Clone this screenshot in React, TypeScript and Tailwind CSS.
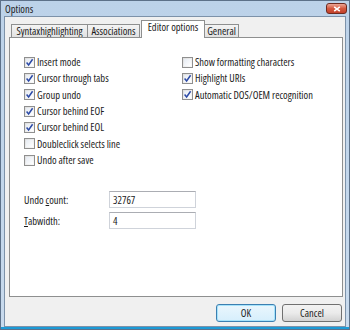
import React from 'react';

const font = { fontFamily: '"Open Sans", "Liberation Sans", sans-serif' };

const Check = ({ checked, label }: { checked: boolean; label: string }) => (
  <div className="flex items-center h-[16.33px] gap-[2px]">
    <span className="w-[11px] h-[11px] border border-[#8f8f8f] bg-gradient-to-br from-[#dedede] to-[#fbfbfb] flex items-center justify-center shrink-0">
      <span className="w-[7px] h-[7px] bg-gradient-to-br from-[#e6ebf2] to-[#ffffff] flex items-center justify-center relative">
        {checked && (
          <svg width="9" height="9" viewBox="0 0 9 9" className="absolute -top-[1px] -left-[1px]">
            <path d="M1.6 4.6 L3.6 7 L7.6 1.2" stroke="#2c4aa6" strokeWidth="1.5" fill="none" />
          </svg>
        )}
      </span>
    </span>
    <span className="text-[10.5px] text-[#1b1b1b] leading-none whitespace-nowrap">{label}</span>
  </div>
);

export default function App() {
  return (
    <div style={font} className="w-[350px] h-[330px] flex flex-col bg-gradient-to-b from-[#bcd2e9] to-[#c8daed] border border-[#5d7189] overflow-hidden [font-stretch:83%]">
      {/* title bar */}
      <div className="h-[15px] flex items-start justify-between pl-[4px] pr-[2px] shrink-0">
        <span className="text-[10.5px] text-[#1e1e1e] leading-none mt-[3px]">Options</span>
        <span className="w-[21px] h-[11px] mt-[2px] rounded-[3px] border border-[#6e2a1f] bg-gradient-to-b from-[#eaa696] via-[#d4583f] to-[#c2402a] flex items-center justify-center">
          <svg width="8" height="6" viewBox="0 0 8 6">
            <path d="M1.2 0.8 L6.8 5.2 M6.8 0.8 L1.2 5.2" stroke="#ffffff" strokeWidth="1.6" />
          </svg>
        </span>
      </div>

      {/* client */}
      <div className="flex-1 mx-[3px] bg-[#f0f0f0] border border-[#7d92a9] flex flex-col pl-[4px] pr-[2px] pt-[3px]">
        {/* tabs */}
        <div className="flex items-end h-[17px] pl-[2px] text-[10.5px] text-[#1b1b1b] leading-none shrink-0">
          <div className="w-[77px] h-[13px] border border-[#8e8f8f] border-b-0 bg-gradient-to-b from-[#f4f4f4] to-[#e2e2e2] flex items-center justify-center">Syntaxhighlighting</div>
          <div className="w-[52px] h-[13px] border border-[#8e8f8f] border-b-0 border-l-0 bg-gradient-to-b from-[#f4f4f4] to-[#e2e2e2] flex items-center justify-center">Associations</div>
          <div className="w-[64px] h-[18px] border border-[#8e8f8f] border-b-0 bg-white flex items-center justify-center -mb-[1px] relative z-10 ml-[1px] pb-[4px]">Editor options</div>
          <div className="w-[34px] h-[13px] border border-[#8e8f8f] border-b-0 border-l-0 bg-gradient-to-b from-[#f4f4f4] to-[#e2e2e2] flex items-center justify-center">General</div>
        </div>

        {/* panel */}
        <div className="h-[260px] bg-white border border-[#8e8f8f] flex flex-col pl-[14px] pt-[16px] shrink-0">
          <div className="flex">
            <div className="w-[158px] flex flex-col">
              <Check checked label="Insert mode" />
              <Check checked label="Cursor through tabs" />
              <Check checked label="Group undo" />
              <Check checked label="Cursor behind EOF" />
              <Check checked label="Cursor behind EOL" />
              <Check checked={false} label="Doubleclick selects line" />
              <Check checked={false} label="Undo after save" />
            </div>
            <div className="flex flex-col">
              <Check checked={false} label="Show formatting characters" />
              <Check checked label="Highlight URIs" />
              <Check checked label="Automatic DOS/OEM recognition" />
            </div>
          </div>

          <div className="flex flex-col gap-[4px] mt-[23px] text-[10.5px] text-[#1b1b1b]">
            <div className="flex items-center">
              <span className="w-[85px] leading-none">Undo <u>c</u>ount:</span>
              <div className="w-[87px] h-[17px] border border-[#cfd3da] border-t-[#abadb3] flex items-center px-[3px] leading-none">32767</div>
            </div>
            <div className="flex items-center">
              <span className="w-[85px] leading-none"><u>T</u>abwidth:</span>
              <div className="w-[87px] h-[17px] border border-[#cfd3da] border-t-[#abadb3] flex items-center px-[3px] leading-none">4</div>
            </div>
          </div>
        </div>

        {/* buttons */}
        <div className="flex justify-end gap-[6px] mt-[7px] pr-[1px] text-[10.5px] text-[#1b1b1b]">
          <button className="w-[60px] h-[18px] rounded-[3px] border border-[#3c7fb1] bg-gradient-to-b from-[#eaf6fd] to-[#d6eefc] shadow-[inset_0_0_0_1px_#a6e3fb] flex items-center justify-center leading-none">OK</button>
          <button className="w-[60px] h-[18px] rounded-[3px] border border-[#707070] bg-gradient-to-b from-[#f2f2f2] via-[#ebebeb] to-[#d2d2d2] flex items-center justify-center leading-none">Cancel</button>
        </div>
      </div>
      <div className="h-[2px] bg-[#1c9ad6] shrink-0" />
    </div>
  );
}
